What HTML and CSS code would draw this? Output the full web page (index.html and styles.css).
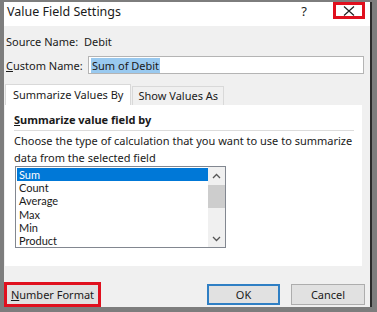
FILE: index.html
```html
<!DOCTYPE html>
<html lang="en">
<head>
<meta charset="UTF-8" />
<title>Value Field Settings</title>
<link rel="stylesheet" href="styles.css">
</head>
<body>

<div class="dialog">
  <div class="titlebar">
    <span class="title">Value Field Settings</span>
    <span class="help">?</span>
    <span class="close">
      <svg width="14" height="10" viewBox="0 0 14 10"><path d="M2 0.5 L12 9.5 M12 0.5 L2 9.5" stroke="#222" stroke-width="1.2" fill="none"/></svg>
    </span>
  </div>

  <div class="content">
    <div class="row source">
      <span class="label">Source Name:</span>
      <span>Debit</span>
    </div>
    <div class="row custom">
      <span class="label"><u>C</u>ustom Name:</span>
      <div class="input"><span class="sel">Sum of Debit</span></div>
    </div>

    <div class="tabs">
      <div class="tab active">Summarize Values By</div>
      <div class="tab">Show Values As</div>
    </div>
    <div class="panel">
      <div class="heading"><u>S</u>ummarize value field by</div>
      <p class="desc">Choose the type of calculation that you want to use to summarize data from the selected field</p>
      <div class="listbox">
        <ul class="items">
          <li class="selected">Sum</li>
          <li>Count</li>
          <li>Average</li>
          <li>Max</li>
          <li>Min</li>
          <li>Product</li>
        </ul>
        <div class="scrollbar">
          <svg class="arrow" width="9" height="6" viewBox="0 0 9 6"><path d="M1 5 L4.5 1.5 L8 5" stroke="#555" stroke-width="1.3" fill="none"/></svg>
          <div class="thumb"></div>
          <svg class="arrow down" width="9" height="6" viewBox="0 0 9 6"><path d="M1 1 L4.5 4.5 L8 1" stroke="#555" stroke-width="1.3" fill="none"/></svg>
        </div>
      </div>
    </div>

    <div class="buttons">
      <button class="btn number"><u>N</u>umber Format</button>
      <span class="spacer"></span>
      <button class="btn ok">OK</button>
      <button class="btn">Cancel</button>
    </div>
  </div>
</div>

</body>
</html>
```

FILE: styles.css
```css
body {
  margin: 0;
  background: #7d7d7d;
  font-family: "Noto Sans", "Open Sans", sans-serif;
  font-size: 11px;
  color: #1a1a1a;
  width: 377px;
  height: 312px;
  overflow: hidden;
}
.dialog {
  margin: 2px 0 0 4px;
  width: 366px;
  height: 305px;
  border-right: 2px solid #2b2b2b;
  display: flex;
  flex-direction: column;
}
.titlebar {
  height: 24px;
  background: #fff;
  display: flex;
  align-items: flex-start;
}
.title {
  padding: 1px 0 0 3px;
  font-size: 12.5px;
  flex: 1;
}
.help {
  font-size: 13px;
  margin-right: 26px;
}
.close {
  width: 26px;
  height: 11px;
  border: 3px solid #e0101e;
  margin: 0 5px 0 0;
  display: flex;
  align-items: center;
  justify-content: center;
}
.content {
  flex: 1;
  background: #f0f0f0;
  display: flex;
  flex-direction: column;
}
.row {
  display: flex;
  align-items: center;
  padding-left: 2px;
}
.source {
  height: 24px;
  margin-top: 3px;
}
.source .label {
  width: 78px;
}
.custom {
  height: 20px;
  margin-top: 2px;
}
.custom .label {
  width: 82px;
}
.input {
  width: 272px;
  height: 16px;
  border: 1px solid #b4b4b4;
  background: #fff;
  display: flex;
  align-items: center;
  padding-left: 2px;
}
.sel {
  background: #99c9ef;
  padding: 0 1px;
  line-height: 15px;
}
.tabs {
  display: flex;
  margin-top: 10px;
  padding-left: 1px;
  height: 20px;
  align-items: flex-end;
}
.tab {
  height: 18px;
  line-height: 18px;
  padding: 0 5px;
  border: 1px solid #d9d9d9;
  border-bottom: none;
  margin-right: 1px;
}
.tab.active {
  height: 20px;
  line-height: 20px;
  background: #fff;
  padding: 0 7px;
}
.panel {
  width: 357px;
  height: 161px;
  background: #fff;
  margin-left: 1px;
  box-sizing: border-box;
  padding: 7px 8px 0 9px;
}
.heading {
  font-weight: bold;
  padding-bottom: 3px;
  border-bottom: 1px solid #dcdcdc;
}
.desc {
  margin: 1px 0 0;
  line-height: 17px;
}
.listbox {
  width: 209px;
  height: 80px;
  border: 1px solid #828790;
  display: flex;
  margin-left: 1px;
}
.items {
  list-style: none;
  margin: 0;
  padding: 1px 0 0 1px;
  flex: 1;
  font-family: Lato, "Noto Sans", sans-serif;
  font-size: 11px;
}
.items li {
  height: 13.2px;
  line-height: 13.2px;
  padding-left: 2px;
}
.items li.selected {
  background: #0078d7;
  color: #fff;
}
.scrollbar {
  width: 17px;
  background: #f0f0f0;
  display: flex;
  flex-direction: column;
  align-items: center;
}
.arrow {
  margin-top: 6px;
}
.arrow.down {
  margin: auto 0 5px;
}
.thumb {
  width: 17px;
  height: 23px;
  background: #cdcdcd;
  margin-top: 6px;
}
.buttons {
  display: flex;
  margin-top: auto;
  align-items: flex-end;
  padding-right: 5px;
}
.btn {
  font-family: inherit;
  font-size: 11px;
  color: #1a1a1a;
  height: 21px;
  background: #e1e1e1;
  border: 1px solid #adadad;
  margin-bottom: 2px;
  padding: 0;
}
.number {
  width: 97px;
  height: 25px;
  border: 3px solid #e0101e;
  margin: 0;
}
.spacer {
  flex: 1;
}
.ok {
  width: 73px;
  border: 2px solid #2f7fc4;
  margin-right: 11px;
}
.btn:last-child {
  width: 74px;
}
```
